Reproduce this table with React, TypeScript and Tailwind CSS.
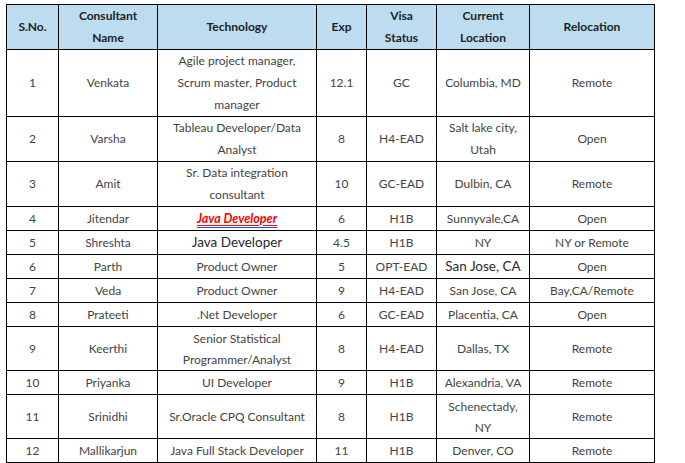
import React from "react";

type Row = {
  n: string;
  name: string;
  tech: React.ReactNode;
  exp: string;
  visa: string;
  loc: React.ReactNode;
  rel: string;
  h: string;
};

const rows: Row[] = [
  { n: "1", name: "Venkata", tech: (<>Agile project manager,<br />Scrum master, Product<br />manager</>), exp: "12.1", visa: "GC", loc: "Columbia, MD", rel: "Remote", h: "h-[67px] leading-[22px]" },
  { n: "2", name: "Varsha", tech: (<>Tableau Developer/Data<br />Analyst</>), exp: "8", visa: "H4-EAD", loc: (<>Salt lake city,<br />Utah</>), rel: "Open", h: "h-[45px] leading-[22px]" },
  { n: "3", name: "Amit", tech: (<>Sr. Data integration<br />consultant</>), exp: "10", visa: "GC-EAD", loc: "Dulbin, CA", rel: "Remote", h: "h-[45px] leading-[22px]" },
  {
    n: "4",
    name: "Jitendar",
    tech: (
      <span className="inline-block border-b border-[#1f4fd6] leading-[17px]">
        <span className="font-bold italic text-[#ff0000] underline decoration-[#ff0000] underline-offset-[2px] text-[12.5px]">Java Developer</span>
      </span>
    ),
    exp: "6",
    visa: "H1B",
    loc: "Sunnyvale,CA",
    rel: "Open",
    h: "h-[24px] leading-[20px]",
  },
  { n: "5", name: "Shreshta", tech: <span className="text-[13.5px] text-[#2a2a2a]">Java Developer</span>, exp: "4.5", visa: "H1B", loc: "NY", rel: "NY or Remote", h: "h-[24px] leading-[20px]" },
  { n: "6", name: "Parth", tech: "Product Owner", exp: "5", visa: "OPT-EAD", loc: <span className="text-[13.5px] text-[#2a2a2a]">San Jose, CA</span>, rel: "Open", h: "h-[24px] leading-[20px]" },
  { n: "7", name: "Veda", tech: "Product Owner", exp: "9", visa: "H4-EAD", loc: "San Jose, CA", rel: "Bay,CA/Remote", h: "h-[24px] leading-[20px]" },
  { n: "8", name: "Prateeti", tech: ".Net Developer", exp: "6", visa: "GC-EAD", loc: "Placentia, CA", rel: "Open", h: "h-[24px] leading-[20px]" },
  { n: "9", name: "Keerthi", tech: (<>Senior Statistical<br />Programmer/Analyst</>), exp: "8", visa: "H4-EAD", loc: "Dallas, TX", rel: "Remote", h: "h-[44px] leading-[21px]" },
  { n: "10", name: "Priyanka", tech: "UI Developer", exp: "9", visa: "H1B", loc: "Alexandria, VA", rel: "Remote", h: "h-[24px] leading-[20px]" },
  { n: "11", name: "Srinidhi", tech: "Sr.Oracle CPQ Consultant", exp: "8", visa: "H1B", loc: (<>Schenectady,<br />NY</>), rel: "Remote", h: "h-[44px] leading-[21px]" },
  { n: "12", name: "Mallikarjun", tech: "Java Full Stack Developer", exp: "11", visa: "H1B", loc: "Denver, CO", rel: "Remote", h: "h-[24px] leading-[20px]" },
  { n: "", name: "", tech: "", exp: "", visa: "", loc: "", rel: "", h: "h-[24px] leading-[20px]" },
];

const td = "border border-black text-center align-middle p-0";

export default function App() {
  return (
    <div className="w-[685px] h-[463px] overflow-hidden bg-white pt-[4px] pl-[6px]" style={{ fontFamily: "Lato, 'Open Sans', sans-serif" }}>
      <table className="border-collapse table-fixed w-[648px] text-[12px] text-[#444]">
        <colgroup>
          <col className="w-[52px]" />
          <col className="w-[99px]" />
          <col className="w-[159px]" />
          <col className="w-[50px]" />
          <col className="w-[70px]" />
          <col className="w-[93px]" />
          <col className="w-[125px]" />
        </colgroup>
        <thead>
          <tr className="bg-[#bcdcef] text-[#222] font-bold h-[45px] leading-[22px]">
            <th className={td}>S.No.</th>
            <th className={td}>Consultant<br />Name</th>
            <th className={td}>Technology</th>
            <th className={td}>Exp</th>
            <th className={td}>Visa<br />Status</th>
            <th className={td}>Current<br />Location</th>
            <th className={td}>Relocation</th>
          </tr>
        </thead>
        <tbody>
          {rows.map((r, i) => (
            <tr key={i} className={r.h}>
              <td className={td}>{r.n}</td>
              <td className={td}>{r.name}</td>
              <td className={td}>{r.tech}</td>
              <td className={td}>{r.exp}</td>
              <td className={td}>{r.visa}</td>
              <td className={td}>{r.loc}</td>
              <td className={td}>{r.rel}</td>
            </tr>
          ))}
        </tbody>
      </table>
    </div>
  );
}
